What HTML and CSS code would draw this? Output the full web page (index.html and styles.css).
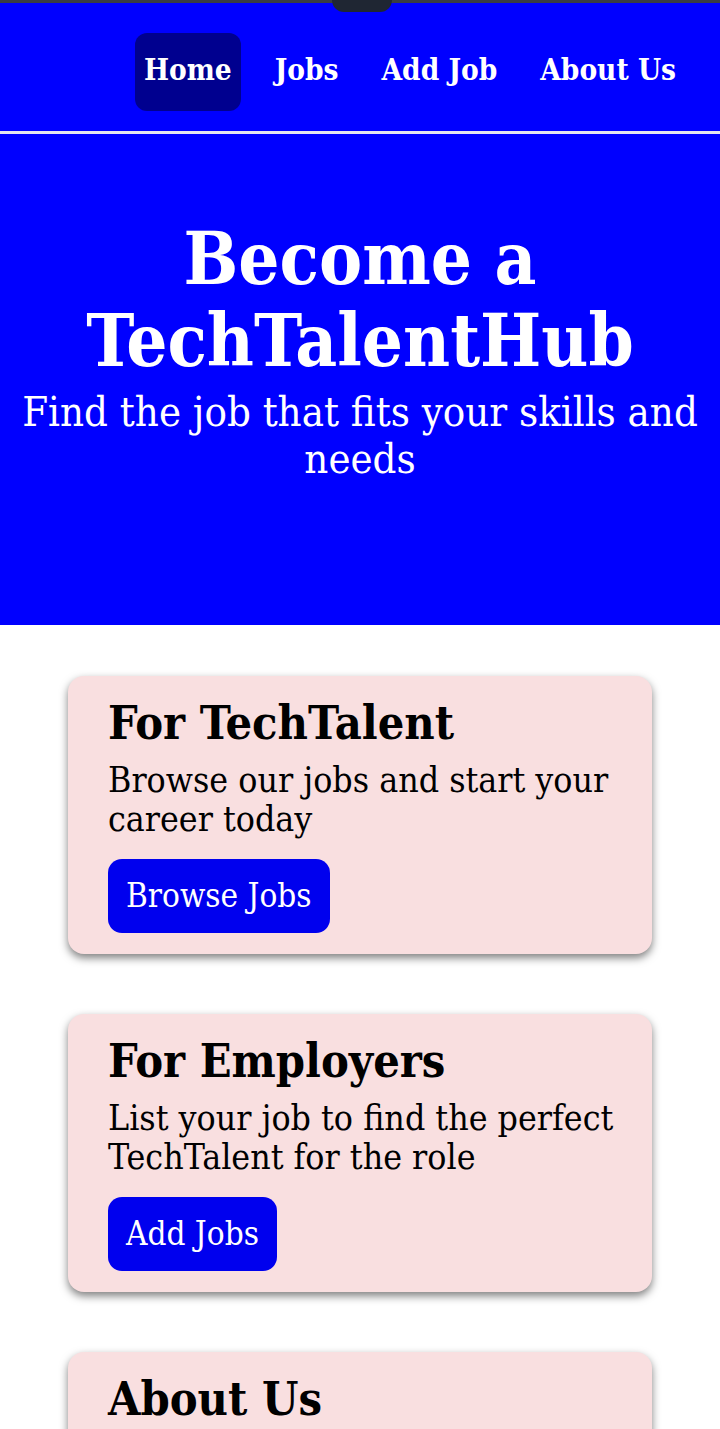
FILE: index.html
```html
<!DOCTYPE html>
<html lang="en">
<head>
<meta charset="utf-8">
<title>TechTalentHub</title>
<link rel="stylesheet" href="styles.css">
</head>
<body>
<div class="statusbar"><span class="notch"></span></div>
<nav class="navbar">
  <a class="nav-link active" href="#">Home</a>
  <a class="nav-link" href="#">Jobs</a>
  <a class="nav-link" href="#">Add Job</a>
  <a class="nav-link" href="#">About Us</a>
</nav>
<section class="hero">
  <h1 class="hero-title">Become a TechTalentHub</h1>
  <p class="hero-sub">Find the job that fits your skills and needs</p>
</section>
<main class="cards">
  <div class="card">
    <h2 class="card-title">For TechTalent</h2>
    <p class="card-text">Browse our jobs and start your career today</p>
    <a class="btn" href="#">Browse Jobs</a>
  </div>
  <div class="card">
    <h2 class="card-title">For Employers</h2>
    <p class="card-text">List your job to find the perfect TechTalent for the role</p>
    <a class="btn" href="#">Add Jobs</a>
  </div>
  <div class="card">
    <h2 class="card-title">About Us</h2>
    <p class="card-text">Learn more about TechTalentHub and our mission</p>
    <a class="btn" href="#">About Us</a>
  </div>
</main>
</body>
</html>
```

FILE: styles.css
```css
* { box-sizing: border-box; }
html, body { margin: 0; padding: 0; }
body {
  font-family: "DejaVu Serif Condensed", "DejaVu Serif", serif;
  background: #ffffff;
  color: #000;
}
.statusbar {
  height: 3px;
  background: #3a3d42;
  position: relative;
}
.notch {
  position: absolute;
  left: 332px;
  top: 0;
  width: 60px;
  height: 12px;
  background: #1f2633;
  border-radius: 0 0 30px 30px;
}
.navbar {
  background: #0000ff;
  display: flex;
  justify-content: flex-end;
  align-items: center;
  gap: 25px;
  padding: 30px 35px 20px 0;
  height: 131px;
  border-bottom: 3px solid #e4e4f0;
}
.nav-link {
  color: #fff;
  text-decoration: none;
  font-weight: bold;
  font-size: 29.5px;
  padding: 0 9px 6px;
  height: 78px;
  display: flex;
  align-items: center;
  border-radius: 12px;
}
.nav-link.active {
  background: #00008f;
}
.hero {
  background: #0000ff;
  color: #fff;
  text-align: center;
  height: 491px;
  padding: 84px 10px 0;
}
.hero-title {
  margin: 0;
  font-size: 72px;
  line-height: 82px;
  font-weight: bold;
}
.hero-sub {
  margin: 6px 0 0;
  font-size: 41.5px;
  line-height: 47px;
}
.cards {
  padding: 51px 68px 0;
  display: flex;
  flex-direction: column;
  gap: 60px;
}
.card {
  background: #f9dfe0;
  border-radius: 16px;
  padding: 19px 28px 21px 40px;
  box-shadow: 0 4px 8px rgba(0,0,0,0.5);
}
.card-title {
  margin: 0;
  font-size: 46.5px;
  line-height: 56px;
  font-weight: bold;
}
.card-text {
  margin: 9px 0 21px;
  font-size: 35.4px;
  line-height: 39px;
}
.btn {
  display: inline-block;
  background: #0000ee;
  color: #fff;
  text-decoration: none;
  font-size: 33px;
  line-height: 74px;
  padding: 0 18px;
  border-radius: 14px;
}
```
